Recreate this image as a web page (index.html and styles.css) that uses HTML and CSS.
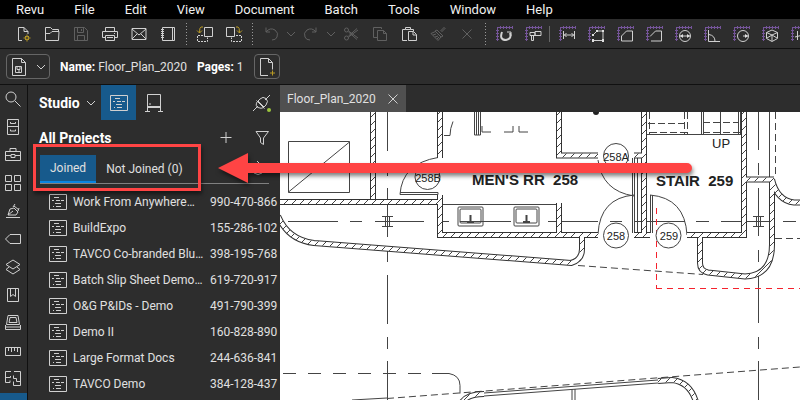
FILE: index.html
```html
<!DOCTYPE html>
<html lang="en">
<head>
    <meta charset="UTF-8">
    <meta name="viewport" content="width=device-width, initial-scale=1.0">
    <title>Revu</title>
    <link rel="stylesheet" href="styles.css">
</head>
<body>
    <!-- shared icons -->
    <svg class="defs" aria-hidden="true">
        <symbol id="ruler" viewBox="0 0 18 18">
            <path d="M2.500 2v14M3 2.500h15" stroke="#75559a" fill="none"/>
            <path d="M1 5.500h3M1 8.500h3M1 11.500h3M1 14.500h3M5.500 1v3M8.500 1v3M11.500 1v3M14.500 1v3M17.500 1v3" stroke="#75559a" fill="none"/>
        </symbol>
        <symbol id="project" viewBox="0 0 18 16">
            <path d="M.5.5h17v15H.500z"/>
            <path d="M5 3.500h5M3 6.500h2M7 6.500h4M12 6.500h3M6 9.500h6M4 12.500h1M7 12.500h5"/>
        </symbol>
        <symbol id="chevron" viewBox="0 0 10 10">
            <path d="M1 3l4 4 4-4"/>
        </symbol>
    </svg>

    <div class="app">
        <nav class="menu">
            <button>Revu</button>
            <button>File</button>
            <button>Edit</button>
            <button>View</button>
            <button>Document</button>
            <button>Batch</button>
            <button>Tools</button>
            <button>Window</button>
            <button>Help</button>
        </nav>

        <div class="toolbar">
            <button class="tool" aria-label="New"><svg viewBox="0 0 18 18"><path d="M8 15.500H4.500v-13H10l4 4V9M10 2.500v4h4"/><path class="gold" d="M13 9.500v7M9.500 13h7M11 11l4 4M15 11l-4 4"/><circle cx="13" cy="13" r="1.500" fill="#2d2d2d" class="gold"/></svg></button>
            <button class="tool" aria-label="Open"><svg viewBox="0 0 18 18"><path d="M2.500 15.500v-13h5l2 2h6V7M2.500 15.500h13l.5-9H9L7 8.500H2.500"/></svg></button>
            <button class="tool off" aria-label="Save"><svg viewBox="0 0 18 18"><path d="M2.500 2.500h10l3 3v10h-13zM5.500 2.500v5h6v-5M9.500 4v2M5.500 15.500v-5h7v5"/></svg></button>
            <button class="tool" aria-label="Print"><svg viewBox="0 0 18 18"><path d="M4.500 6.500v-4h9v4M4.500 12.500h-3v-6h15v6h-3M4.500 10.500h9v5h-9zM6 12.500h6M13 8.500h1"/></svg></button>
            <button class="tool" aria-label="Email"><svg viewBox="0 0 18 18"><path d="M2 3.500h14v11H2zM2 4l7 6 7-6M2 14l5-5M16 14l-5-5"/></svg></button>
            <button class="tool" aria-label="Notebook"><svg viewBox="0 0 18 18"><path d="M3.500 2.500h12v13h-12zM13.500 2.500v13"/><path d="M2 4.500h3M2 6.500h3M2 8.500h3M2 10.500h3M2 12.500h3"/></svg></button>
            <span class="dots"></span>
            <button class="tool" aria-label="Move page left"><svg viewBox="0 0 18 18"><path d="M8.500 2.500h8v9h-8z"/><path stroke-dasharray="2 1" d="M7 10.500H1.500v6h10v-4"/><path class="gold" d="M7 2H5Q3.500 2 3.500 8M1 5.500L3.500 8 6 5.500"/></svg></button>
            <button class="tool" aria-label="Move page right"><svg viewBox="0 0 18 18"><path d="M1.500 2.500h8v9h-8z"/><path stroke-dasharray="2 1" d="M11 10.500h5.500v6h-10v-4"/><path class="gold" d="M11 2h2q1.500 0 1.500 6M12 5.500L14.500 8 17 5.500"/></svg></button>
            <span class="dots"></span>
            <button class="tool off" aria-label="Undo"><svg viewBox="0 0 18 18"><path d="M4 7q4-5 9-2 4 3 2 7-1 3-5 3M4 2.500V7h4"/></svg></button>
            <button class="drop off" aria-label="Undo list"><svg><use href="#chevron"/></svg></button>
            <button class="tool off" aria-label="Redo"><svg viewBox="0 0 18 18"><path d="M14 7q-4-5-9-2-4 3-2 7 1 3 5 3M14 2.500V7h-4"/></svg></button>
            <button class="drop off" aria-label="Redo list"><svg><use href="#chevron"/></svg></button>
            <button class="tool off" aria-label="Cut"><svg viewBox="0 0 18 18"><circle cx="4.500" cy="5" r="2"/><circle cx="4.500" cy="13" r="2"/><path d="M6.500 6L16 13M6.500 12L16 5M6.500 7L15 14.500M6.500 11L15 3.500"/></svg></button>
            <button class="tool off" aria-label="Copy"><svg viewBox="0 0 18 18"><path d="M6 12.500H2.500v-10h8V4M6.500 5.500h6l3 3v7h-9zM12.500 5.500v3h3"/></svg></button>
            <button class="tool" aria-label="Paste"><svg viewBox="0 0 18 18"><path d="M7 15.500H2.500v-11h3v-2h5v2h3V6M5.500 4.500h5M8.500 6.500h5l3 3v6h-8zM13 6.500V10h3.500"/></svg></button>
            <button class="tool off" aria-label="Format painter"><svg viewBox="0 0 18 18"><path d="M15.500 2l-4 4M16.500 3l-4 4M8 5l6 6-2 1-6-6zM6.500 6.500L2 8.500l7 7 3-3.500M4 10l3-1M6 12l3-1M8 14l2-2"/></svg></button>
            <button class="tool off" aria-label="Delete"><svg viewBox="0 0 18 18"><path d="M4.500 4.500l9 9M13.500 4.500l-9 9"/></svg></button>
            <span class="dots"></span>
            <button class="tool" aria-label="Calibrate"><svg viewBox="0 0 18 18"><use href="#ruler"/><path stroke-width="2" d="M7 7q-3 8 4 8 6-1 4-7"/><path d="M12 7h4v4"/></svg></button>
            <button class="tool" aria-label="Measure"><svg viewBox="0 0 18 18"><use href="#ruler"/><path d="M6 7.500h5v3H6zM11 6.500h6v4h-6zM9.500 10.500v5h-2v-5"/></svg></button>
            <span class="line"></span>
            <button class="tool" aria-label="Length"><svg viewBox="0 0 18 18"><use href="#ruler"/><path d="M5.500 6v8M16.500 6v8M6 10h10M8.500 8l-2 2 2 2M13.500 8l2 2-2 2"/></svg></button>
            <button class="tool" aria-label="Polylength"><svg viewBox="0 0 18 18"><use href="#ruler"/><path d="M6 10l4-4h6v9.500H6"/><path class="fill" d="M5 9h2v2H5zM9 5h2v2H9zM15 5h2v2h-2zM15 14h2v3h-2zM5 14h2v3H5z"/></svg></button>
            <button class="tool" aria-label="Area"><svg viewBox="0 0 18 18"><use href="#ruler"/><path d="M5.500 16v-5l5-5h6v10z"/></svg></button>
            <button class="tool" aria-label="Perimeter"><svg viewBox="0 0 18 18"><use href="#ruler"/><path d="M5 11.500L10.500 6h6v10H6"/></svg></button>
            <button class="tool" aria-label="Diameter"><svg viewBox="0 0 18 18"><use href="#ruler"/><circle cx="11" cy="11" r="5.500"/><path d="M6 11h10"/><path class="fill" d="M6 11l3-2v4zM16 11l-3-2v4z"/></svg></button>
            <button class="tool" aria-label="Angle"><svg viewBox="0 0 18 18"><use href="#ruler"/><path d="M5.500 5v11.500H17M6 9.500q6 1 6 7"/></svg></button>
            <button class="tool" aria-label="Radius"><svg viewBox="0 0 18 18"><use href="#ruler"/><circle cx="11" cy="11" r="5.500"/><path d="M11 11h5"/><path class="fill" d="M16 11l-3-2v4z"/></svg></button>
            <button class="tool" aria-label="Volume"><svg viewBox="0 0 18 18"><use href="#ruler"/><path d="M11 5l5.500 2.500v6L11 16.500l-5.500-3v-6zM5.500 7.500L11 10l5.500-2.500M11 10v6M6 13l5-3 5 3"/></svg></button>
            <button class="tool" aria-label="Count"><svg viewBox="0 0 18 18"><use href="#ruler"/><path d="M7.500 6v9M10.500 6v9M13.500 6v9M5 12l12-3"/></svg></button>
        </div>

        <div class="docbar">
            <button class="docbtn" aria-label="Document view">
                <svg class="doc" viewBox="0 0 16 18"><path d="M1.500.5h9l4 4v13h-13zM10.500.500v4h4M4.500 8.500h6v6h-6zM6 8.500v3h3v-3M7 13h2"/></svg>
                <svg class="chev"><use href="#chevron"/></svg>
            </button>
            <p><b>Name:</b> Floor_Plan_2020</p>
            <p><b>Pages:</b> 1</p>
            <button class="docbtn small" aria-label="Add page">
                <svg class="doc" viewBox="0 0 16 18"><path d="M9 17.500H1.500V.5h8l4 4v7M9.500.500v4h4"/><path class="gold" d="M13.500 12.500v5M11 15h5"/></svg>
            </button>
        </div>

        <div class="work">
            <aside class="rail">
                <button aria-label="Search"><svg viewBox="0 0 16 16"><circle cx="6" cy="6" r="5"/><path d="M10 10l5.500 5.500"/></svg></button>
                <button aria-label="File access"><svg viewBox="0 0 16 16"><path d="M2.500.500h11v15h-11zM2.500 7.500h11M5.500 3v1.500h5V3M5.500 10.500V12h5v-1.500"/></svg></button>
                <button aria-label="Tool chest"><svg viewBox="0 0 16 16"><path d="M.5 4.500h15v9H.500zM5 4.500v-3h6v3M.5 8.500H6M10 8.500h5.500M6 7.500h4v3H6z"/></svg></button>
                <button aria-label="Thumbnails"><svg viewBox="0 0 16 16"><path d="M.5.5h6v6h-6zM9.500.5h6v6h-6zM.5 9.500h6v6h-6zM9.500 9.500h6v6h-6z"/></svg></button>
                <button aria-label="Signatures"><svg viewBox="0 0 16 16"><path d="M1 14.500h14M3 12l2-6 4-1 4 4-2 3zM3 12l5-4M8 4l2-3M13 8l1-3M9 3l5 4"/></svg></button>
                <button aria-label="Markups"><svg viewBox="0 0 16 16"><path d="M5 3.500h10.500v9H5L.5 8z"/></svg></button>
                <button aria-label="Layers"><svg viewBox="0 0 16 16"><path d="M8 1l7 4.500L8 10 1 5.500zM4 8l-3 2.500L8 15l7-4.500L12 8"/></svg></button>
                <button aria-label="Bookmarks"><svg viewBox="0 0 16 16"><path d="M2.500 1.500h11v13h-11zM5.500 1.500v8L8 7.500l2.500 2v-8"/></svg></button>
                <button aria-label="Sets"><svg viewBox="0 0 16 16"><path d="M3 .5h10l1.500 9h-13zM5 2.500h6l1 5H4zM.5 10v2h15v-2M.5 12v2.500h15V12"/></svg></button>
                <button aria-label="Measurements"><svg viewBox="0 0 16 16"><path d="M.5 4.500h15v8H.500zM3.500 5v3M6.500 5v4M9.500 5v3M12.500 5v4"/></svg></button>
                <button aria-label="Spaces"><svg viewBox="0 0 16 16"><path d="M6 .5H.5v11H5M.5 6.500h5V5M9 .5h6.500v14H8.500v-4M8.500 4.500v3h3M11.500 7.500v3h4M5 9.500v2"/></svg></button>
                <button class="active" aria-label="Studio"><svg viewBox="0 0 16 16"><path d="M3 13l8-11M8 1l6 6"/></svg></button>
            </aside>

            <section class="panel">
                <header class="panel-head">
                    <button class="title">Studio <svg class="chev"><use href="#chevron"/></svg></button>
                    <button class="mode selected" aria-label="Projects"><svg class="project"><use href="#project"/></svg></button>
                    <button class="mode" aria-label="Sessions"><svg class="session" viewBox="0 0 18 18"><path d="M2.500 18V.5h13V18M0 17.500h5M13 17.500h5M4 10h2"/><path stroke-width="2" d="M2 13h14"/></svg></button>
                    <button class="icon plug" aria-label="Connection"><svg viewBox="0 0 18 18"><path d="M0 17l5-5M12 6l5-5M5 7l6 6 2-2q3-4 0-6.500T7 5zM4 8q-2 4 1 5.500t6 0M3.500 6.500l8 8"/><circle class="dot" cx="16" cy="16" r="2"/></svg></button>
                </header>
                <div class="panel-title">
                    <h2>All Projects</h2>
                    <button class="icon" aria-label="Add project"><svg viewBox="0 0 18 18"><path d="M3.500 8.500h11M9 3v11"/></svg></button>
                    <button class="icon" aria-label="Filter"><svg viewBox="0 0 18 18"><path d="M3 2.500h12.500l-5 6.500v6.500l-3-2V9z"/></svg></button>
                </div>
                <div class="tabs">
                    <button class="current">Joined</button>
                    <button>Not Joined (0)</button>
                    <button class="icon refresh" aria-label="Refresh"><svg viewBox="0 0 18 18"><path d="M5 5Q1 9 4 13q4 3 8 0 3-4-1-8M7 1l4 4-4 2"/></svg></button>
                    <span class="highlight"></span>
                </div>
                <ul class="projects">
                    <li><svg class="project"><use href="#project"/></svg><span>Work From Anywhere…</span><span class="id">990-470-866</span></li>
                    <li><svg class="project"><use href="#project"/></svg><span>BuildExpo</span><span class="id">155-286-102</span></li>
                    <li><svg class="project"><use href="#project"/></svg><span>TAVCO Co-branded Blu…</span><span class="id">398-195-768</span></li>
                    <li><svg class="project"><use href="#project"/></svg><span>Batch Slip Sheet Demo…</span><span class="id">619-720-917</span></li>
                    <li><svg class="project"><use href="#project"/></svg><span>O&amp;G P&amp;IDs - Demo</span><span class="id">491-790-399</span></li>
                    <li><svg class="project"><use href="#project"/></svg><span>Demo II</span><span class="id">160-828-890</span></li>
                    <li><svg class="project"><use href="#project"/></svg><span>Large Format Docs</span><span class="id">244-636-841</span></li>
                    <li><svg class="project"><use href="#project"/></svg><span>TAVCO Demo</span><span class="id">384-128-437</span></li>
                </ul>
            </section>

            <main class="viewer">
                <div class="doctabs">
                    <div class="doctab">Floor_Plan_2020 <button aria-label="Close tab"><svg viewBox="0 0 10 10"><path d="M.5.5l9 9M9.500.5l-9 9"/></svg></button></div>
                </div>
                <svg class="plan" viewBox="280 112 520 288" preserveAspectRatio="xMinYMin slice">
                    <defs>
                        <pattern id="hatch" width="8" height="8" patternUnits="userSpaceOnUse">
                            <path d="M-1 9l10-10" stroke="#444" fill="none"/>
                        </pattern>
                        <g id="walls">
                            <path d="M373 112v87M278 202h162M440 112v46M440 195v40h158M559 112v43.500h39M559 203v30"/>
                            <path d="M644 112v123M634 155.500h10M634 235h16M744 112v123h-57M746 179.500h28"/>
                            <path d="M278 216q10 24 36 27l257 20q11-3 11-14v-14"/>
                            <path d="M700 235v28q0 8 8 9.500l37 4q27-1 27-32v-65q5 21 22 23h8"/>
                            <path d="M462 402q6-8 22-8M658 381l14-1q18 2 24 22"/>
                        </g>
                    </defs>
                    <rect class="paper" x="280" y="112" width="520" height="288"/>

                    <!-- grid lines -->
                    <g class="grid">
                        <path d="M387.500 112v39M387.500 163v13M387.500 188v49M387.500 251v11M387.500 275v49M387.500 337v12M387.500 361v39"/>
                        <path d="M758.500 112v38M758.500 163v12M758.500 188v48M758.500 250v12M758.500 275v48M758.500 337v12M758.500 361v39"/>
                        <path d="M288 221.500h50M350 221.500h12M375 221.500h49M437 221.500h12M460 221.500h51M548 221.500h50M610 221.500h12M634 221.500h51M696 221.500h13M721 221.500h50M783 221.500h13"/>
                        <path d="M382 216.500h11M382 226.500h11M385.500 216v10M389.500 216v10M753 216.500h11M753 226.500h11M756.500 216v10M760.500 216v10"/>
                        <path stroke-dasharray="13 12" d="M283 373.500h149"/>
                        <path d="M432 373.500h17q11 2 11 12v8"/>
                        <path stroke-dasharray="7 4" d="M387 398.500L800 367M578 265.500l125 9M775.500 112v65M775 238.500h25"/>
                    </g>

                    <!-- stairs and fixtures -->
                    <g class="thin">
                        <path d="M288.500 141.500h61v51h-61zM288.500 192l61-50"/>
                        <path d="M442 204.500h114M645 134.500h97M769.500 112v66"/>
                        <path d="M444 135.500h6q0-7 3-14M474.500 112v23h6v-23M476.500 112v23M478.500 112v23M482 126v6h9M504 132h9v-6M519 126v6h9"/>
                        <path d="M400 194.500q2-31 38-37h4M400 194.500h38v-2h-38M598 160q4 31 36 36M598 234q2-36 36-39M650 195q35 3 37 40"/>
                        <path d="M632.500 158v75M634.500 158v75M637.500 158v75M650.500 195v38M652.500 195v38"/>
                        <rect x="458" y="207" width="25" height="19" rx="1"/><rect x="460" y="209" width="21" height="14" rx="1"/>
                        <rect x="514" y="207" width="25" height="19" rx="1"/><rect x="516" y="209" width="21" height="14" rx="1"/>
                        <path stroke-width="2" d="M470.500 215v7M467 222h7M526.500 215v7M523 222h7"/>
                        <path d="M701.500 112v22M703.500 112v22M720.500 112v22M738.500 112v22M740.500 112v22"/>
                        <path stroke-dasharray="7 3" d="M648 123.500h38M703 122.500h36M649.500 112v22M684.500 112v22M687.500 112v22M650 132.500h38M703 132.500h37"/>
                        <path d="M352 400l35-2M484 393l174-13M484 396l174-13M572 389v11M575 389v11"/>
                    </g>
                    <circle cx="596" cy="112" r="3"/>

                    <use class="wall-edge" href="#walls"/>
                    <use class="wall-fill" href="#walls"/>
                    <use class="wall-hatch" href="#walls"/>
                    <path class="red" d="M656.500 208v80M656 288.500h144"/>

                    <g class="tags">
                        <circle cx="427.500" cy="177" r="12.500"/><text x="428" y="182">258B</text>
                        <circle cx="616" cy="156" r="12.500"/><text x="616" y="161">258A</text>
                        <circle cx="616" cy="235.500" r="12.500"/><text x="616" y="240">258</text>
                        <circle cx="668.500" cy="235.500" r="12.500"/><text x="669" y="240">259</text>
                    </g>
                    <text class="up" x="712" y="148">UP</text>
                    <text class="room" x="472" y="185">MEN'S RR&#160; 258</text>
                    <text class="room" x="656" y="186">STAIR&#160; 259</text>
                </svg>
            </main>
        </div>

        <!-- callout arrow pointing to the tabs -->
        <svg class="arrow" viewBox="0 0 480 36" aria-hidden="true">
            <path d="M0 17L30 2v10h439a5 5 0 0 1 0 10H30v10z"/>
        </svg>
    </div>
</body>
</html>
```

FILE: styles.css
```css
* {
    box-sizing: border-box;
}
body {
    margin: 0;
    font-family: Roboto, "Liberation Sans", sans-serif;
    font-size: 12px;
    background: #2d2d2d;
    color: #e0e0e0;
}
button {
    background: none;
    border: none;
    padding: 0;
    margin: 0;
    font: inherit;
    color: inherit;
    display: flex;
    align-items: center;
    justify-content: center;
    flex-shrink: 0;
}
svg {
    fill: none;
    stroke: #d0d0d0;
    flex-shrink: 0;
}
.defs {
    position: absolute;
    width: 0;
    height: 0;
}
.gold {
    stroke: #b99a25;
}
.fill {
    fill: #e0e0e0;
    stroke: none;
}
.app {
    position: relative;
    display: flex;
    flex-direction: column;
    height: 100vh;
    overflow: hidden;
}

/* top bars */
.menu {
    display: flex;
    gap: 30px;
    height: 19px;
    padding-left: 16px;
    background: #000;
    font-size: 13px;
    color: #f0f0f0;
}
.toolbar {
    display: flex;
    align-items: center;
    height: 30px;
    padding-left: 8px;
    border-bottom: 1px solid #101010;
    overflow: hidden;
}
.tool {
    width: 29px;
}
.tool svg {
    width: 18px;
    height: 18px;
}
.drop {
    width: 11px;
}
.drop svg,
.chev {
    width: 10px;
    height: 10px;
}
.off svg {
    stroke: #606060;
}
.dots {
    flex: 0 0 8px;
    height: 22px;
    background: repeating-linear-gradient(#999 0 1px, transparent 1px 3px) center / 1px 100% no-repeat;
}
.line {
    flex: 0 0 5px;
    height: 16px;
    background: linear-gradient(#666, #666) center / 1px 100% no-repeat;
}
.docbar {
    display: flex;
    align-items: center;
    gap: 10px;
    height: 36px;
    padding-left: 6px;
    border-bottom: 1px solid #101010;
}
.docbar p {
    margin: 0;
}
.docbar b {
    color: #fff;
}
.docbtn {
    width: 44px;
    height: 25px;
    gap: 9px;
    border: 1px solid #666;
    border-radius: 4px;
}
.docbtn.small {
    width: 26px;
}
.doc {
    width: 16px;
    height: 18px;
}

/* left rail */
.work {
    display: flex;
    flex: 1;
    min-height: 0;
}
.rail {
    width: 28px;
    border-right: 1px solid #101010;
    overflow: hidden;
}
.rail button {
    width: 26px;
    height: 28px;
}
.rail svg {
    width: 16px;
    height: 16px;
}
.rail .active {
    width: 27px;
    background: #175a8c;
}

/* studio panel */
.panel {
    width: 252px;
    overflow: hidden;
}
.panel-head {
    display: flex;
    align-items: center;
    height: 35px;
    padding-left: 11px;
}
.title {
    width: 62px;
    gap: 6px;
    justify-content: flex-start;
    font-size: 14px;
    font-weight: bold;
    color: #fff;
}
.mode {
    width: 35px;
    height: 35px;
}
.selected {
    background: #175a8c;
}
.project {
    width: 18px;
    height: 16px;
}
.session {
    width: 18px;
    height: 18px;
}
.icon {
    width: 36px;
}
.icon svg {
    width: 18px;
    height: 18px;
}
.plug {
    margin-left: auto;
}
.dot {
    fill: #9bc53d;
    stroke: none;
}
.panel-title {
    display: flex;
    align-items: center;
    height: 35px;
    padding-left: 11px;
}
.panel-title h2 {
    flex: 1;
    margin: 0;
    font-size: 14px;
    color: #fff;
}
.tabs {
    position: relative;
    display: flex;
    height: 29px;
    margin: 0 11px 0 12px;
    border-bottom: 1px solid #808080;
}
.tabs button {
    padding: 0 10px;
}
.tabs .current {
    background: #175a8c;
    border-bottom: 2px solid #0a84e0;
}
.tabs .refresh {
    width: 20px;
    margin-left: auto;
    padding: 0;
}
.highlight {
    position: absolute;
    left: -7px;
    top: -11px;
    width: 168px;
    height: 47px;
    border: 3px solid #ff4444;
    box-shadow: 1px 3px 4px rgba(0, 0, 0, 0.5);
}
.projects {
    margin: 0;
    padding: 5px 3px 0 21px;
    list-style: none;
}
.projects li {
    display: flex;
    align-items: center;
    gap: 6px;
    height: 26px;
    white-space: nowrap;
}
.projects .id {
    width: 67px;
    margin-left: auto;
}

/* document */
.viewer {
    flex: 1;
    min-width: 0;
    display: flex;
    flex-direction: column;
}
.doctabs {
    display: flex;
    height: 27px;
}
.doctab {
    display: flex;
    align-items: center;
    gap: 12px;
    padding: 0 8px 0 7px;
    background: #505050;
}
.doctab svg {
    width: 10px;
    height: 10px;
}
.plan {
    flex: 1;
    width: 100%;
    min-height: 0;
    stroke: none;
    fill: #222;
}
.paper {
    fill: #fff;
}
.grid,
.thin {
    fill: none;
    stroke: #444;
}
.wall-edge,
.wall-fill,
.wall-hatch {
    fill: none;
    stroke: #333;
    stroke-width: 6px;
}
.wall-fill {
    stroke: #fff;
    stroke-width: 4px;
}
.wall-hatch {
    stroke: url(#hatch);
    stroke-width: 4px;
}
.red {
    fill: none;
    stroke: #f5222d;
    stroke-dasharray: 6 5;
}
.tags circle {
    fill: #fff;
    stroke: #444;
}
.tags text {
    font: 11px "Liberation Sans", sans-serif;
    text-anchor: middle;
}
.up {
    font: 13px "Liberation Sans", sans-serif;
}
.room {
    font: bold 15px "Liberation Sans", sans-serif;
}
.arrow {
    position: absolute;
    left: 218px;
    top: 151px;
    width: 480px;
    height: 36px;
    fill: #ff4444;
    stroke: none;
    overflow: visible;
    filter: drop-shadow(1px 3px 2px rgba(0, 0, 0, 0.5));
}
```
